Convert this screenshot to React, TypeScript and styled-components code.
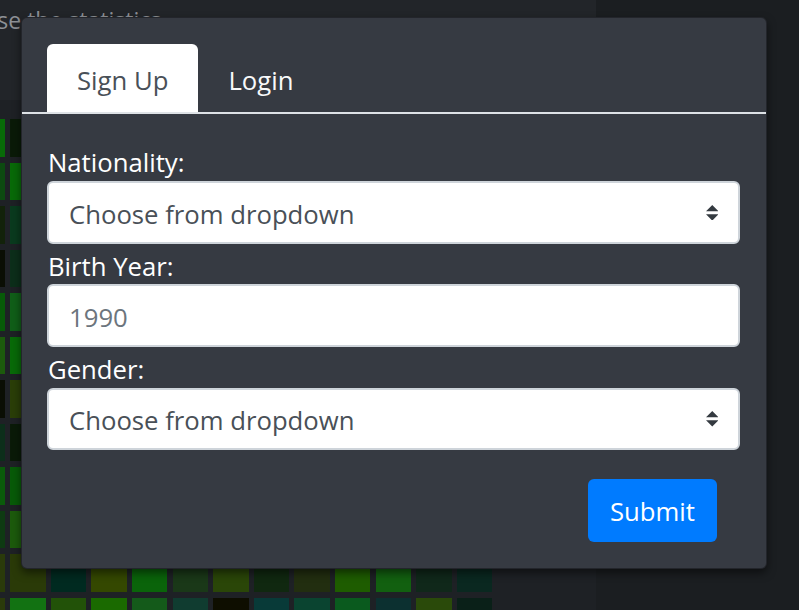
import * as React from 'react'
import styled, { createGlobalStyle } from 'styled-components'

const GlobalStyle = createGlobalStyle`
    html, body {
        margin: 0;
        padding: 0;
    }
    body {
        background: #1b1e21;
        font-family: 'Open Sans', 'Noto Sans', sans-serif;
        overflow: hidden;
    }
    * {
        box-sizing: border-box;
    }
`

const Page = styled.div`
    position: relative;
    width: 799px;
    height: 610px;
    overflow: hidden;
    background: #1b1e21;
`

const StatsPane = styled.div`
    width: 596px;
    height: 100%;
    display: flex;
    flex-direction: column;
    overflow: hidden;
    background: #1e2125;
`

const StatsHeader = styled.div`
    height: 100px;
    flex-shrink: 0;
    overflow: hidden;
    white-space: nowrap;
    background: #222529;
`

const Hint = styled.div`
    margin-left: -192px;
    padding-top: 3px;
    font-size: 23px;
    line-height: 34px;
    color: #8e9196;
`

const TileGrid = styled.div`
    display: grid;
    grid-template-columns: repeat(13, 35.3px);
    grid-auto-rows: 37.5px;
    column-gap: 5.3px;
    row-gap: 6.05px;
    margin-left: -30.3px;
    padding-top: 19px;
`

const Tile = styled.div<{ $color: string }>`
    background: ${props => props.$color};
`

const Modal = styled.div`
    position: absolute;
    left: 21px;
    top: 17px;
    width: 746px;
    border: 1px solid rgba(0, 0, 0, 0.35);
    border-radius: 6px;
    background: #363a42;
    box-shadow: 0 4px 8px rgba(0, 0, 0, 0.5);
    font-size: 25.7px;
`

const TabBar = styled.div`
    display: flex;
    align-items: flex-end;
    padding: 26px 0 0 25px;
    border-bottom: 2px solid #dee2e6;
`

const Tab = styled.div<{ $active: boolean }>`
    height: 68px;
    display: flex;
    align-items: center;
    padding: 4px 30px 0;
    border-radius: 6px 6px 0 0;
    background: ${props => props.$active ? '#ffffff' : 'transparent'};
    color: ${props => props.$active ? '#495057' : '#f8f9fa'};
    cursor: pointer;
`

const Body = styled.form`
    display: flex;
    flex-direction: column;
    padding: 26.5px 26px 26px 25px;
`

const Label = styled.label`
    height: 40.5px;
    display: flex;
    align-items: center;
    padding: 4px 0 0 1px;
    color: #ffffff;
`

const Field = styled.div<{ $placeholder?: boolean }>`
    height: 62.75px;
    display: flex;
    align-items: center;
    justify-content: space-between;
    padding: 0 20px;
    border: 2px solid #ced4da;
    border-radius: 6px;
    background: #ffffff;
    color: ${props => props.$placeholder ? '#6c757d' : '#495057'};
`

const FieldText = styled.span`
    padding-top: 4px;
`

const Footer = styled.div`
    display: flex;
    justify-content: flex-end;
    margin-top: 28.5px;
    padding-right: 23px;
`

const SubmitButton = styled.button`
    height: 62.75px;
    padding: 3px 22px 0;
    border: none;
    border-radius: 6px;
    background: #007bff;
    color: #ffffff;
    font-family: inherit;
    font-size: 25.7px;
    cursor: pointer;
`

const LAST_ROWS = [
    ['#2a3a0a', '#2a3a08', '#002a20', '#344800', '#0a640a', '#1a3818', '#2a4608', '#102810', '#222e10', '#1e5c00', '#126010', '#10281a', '#0a2820'],
    ['#2a3a0a', '#127212', '#225208', '#1a6a00', '#145a1a', '#103c30', '#0e0e00', '#083a38', '#0a4430', '#0a5a1e', '#0c3030', '#2a4a0a', '#0a2018'],
]

const PALETTE = [
    '#0a5a0a', '#0c4a10', '#075a08', '#0a3a1e', '#105e18', '#03401e', '#0c2e1a',
    '#1a4a10', '#086a08', '#043020', '#0a1a08', '#2a3e08', '#126412', '#0a0e04',
    '#0e3a12', '#1c5a0c', '#064a14', '#12220a',
]

const buildTiles = () => {
    let seed = 7
    const next = () => {
        seed = (seed * 9301 + 49297) % 233280
        return seed / 233280
    }
    const rows: string[][] = []
    for (let r = 0; r < 10; r++) {
        const row: string[] = []
        for (let c = 0; c < 13; c++) {
            row.push(PALETTE[Math.floor(next() * PALETTE.length)])
        }
        rows.push(row)
    }
    return rows.concat(LAST_ROWS).flat()
}

const TILES = buildTiles()

const SelectArrows = () => (
    <svg width="12.5" height="15.6" viewBox="0 0 4 5">
        <path d="M2 0L0 2h4zm0 5L0 3h4z" fill="#343a40"/>
    </svg>
)

export default function App() {
    const [tab, setTab] = React.useState<'signup' | 'login'>('signup')

    return (
        <Page>
            <GlobalStyle/>
            <StatsPane>
                <StatsHeader>
                    <Hint>Pick a tile to browse the statistics</Hint>
                </StatsHeader>
                <TileGrid>
                    {TILES.map((color, i) => <Tile key={i} $color={color}/>)}
                </TileGrid>
            </StatsPane>
            <Modal>
                <TabBar>
                    <Tab $active={tab === 'signup'} onClick={() => setTab('signup')}>Sign Up</Tab>
                    <Tab $active={tab === 'login'} onClick={() => setTab('login')}>Login</Tab>
                </TabBar>
                <Body onSubmit={e => e.preventDefault()}>
                    <Label>Nationality:</Label>
                    <Field>
                        <FieldText>Choose from dropdown</FieldText>
                        <SelectArrows/>
                    </Field>
                    <Label>Birth Year:</Label>
                    <Field $placeholder>
                        <FieldText>1990</FieldText>
                    </Field>
                    <Label>Gender:</Label>
                    <Field>
                        <FieldText>Choose from dropdown</FieldText>
                        <SelectArrows/>
                    </Field>
                    <Footer>
                        <SubmitButton type="submit">Submit</SubmitButton>
                    </Footer>
                </Body>
            </Modal>
        </Page>
    )
}
